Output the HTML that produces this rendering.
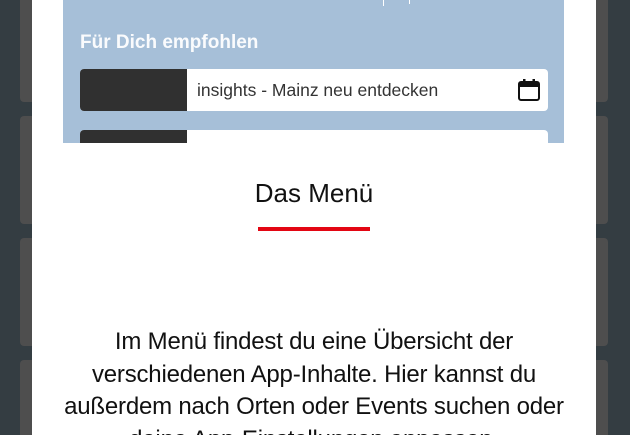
<!DOCTYPE html>
<html style="overflow:hidden;height:435px"><head><meta charset="utf-8"><style>
body{margin:0;width:630px;height:435px;overflow:hidden;background:#343d42;position:relative;font-family:"Liberation Sans",sans-serif}
.c{position:absolute;background:#4e4e4e;border-radius:4px}
.modal{position:absolute;left:32px;top:0;width:564px;height:435px;background:#fff;overflow:hidden}
.blue{position:absolute;left:31px;top:0;width:501px;height:143px;background:#a6bfd8;overflow:hidden}
.row{position:absolute;left:17px;width:468px;height:42px;background:#fff;border-radius:4px;overflow:hidden}
.row .d{position:absolute;left:0;top:0;width:107px;height:100%;background:#303030}
.row span{position:absolute;left:117px;top:11px;font-size:17.5px;color:#333}
h1{position:absolute;left:0;width:564px;top:178px;margin:0;text-align:center;font-weight:normal;font-size:26px;color:#111}
.red{position:absolute;left:226px;top:227px;width:112px;height:4px;background:#e30613}
p{position:absolute;left:-20px;width:604px;top:326px;margin:0;text-align:center;font-size:24px;line-height:32.5px;color:#111;letter-spacing:-0.2px}
</style></head><body>
<div class="c" style="left:20px;top:-5px;width:20px;height:107px"></div>
<div class="c" style="left:20px;top:116px;width:20px;height:108px"></div>
<div class="c" style="left:20px;top:238px;width:20px;height:108px"></div>
<div class="c" style="left:20px;top:360px;width:20px;height:90px"></div>
<div class="c" style="left:588px;top:-5px;width:20px;height:107px"></div>
<div class="c" style="left:588px;top:116px;width:20px;height:108px"></div>
<div class="c" style="left:588px;top:238px;width:20px;height:108px"></div>
<div class="c" style="left:588px;top:360px;width:20px;height:90px"></div>
<div class="modal">
<div class="blue">
<div style="position:absolute;left:320px;top:0;width:1px;height:6px;background:#fff"></div>
<div style="position:absolute;left:346px;top:0;width:1px;height:4px;background:#fff"></div>
<div style="position:absolute;left:17px;top:32px;color:#fff;font-size:19px;font-weight:bold;opacity:.95">Für Dich empfohlen</div>
<div class="row" style="top:69px"><div class="d"></div><span>insights - Mainz neu entdecken</span>
<svg style="position:absolute;left:437px;top:9px" width="24" height="24" viewBox="0 0 24 24"><rect x="2" y="4" width="20" height="18" rx="2" fill="none" stroke="#111" stroke-width="2"/><rect x="2" y="4" width="20" height="5" fill="#111"/><rect x="6" y="1" width="2.5" height="5" fill="#111"/><rect x="15.5" y="1" width="2.5" height="5" fill="#111"/></svg></div>
<div class="row" style="top:130px"><div class="d"></div></div>
</div>
<h1>Das Menü</h1>
<div class="red"></div>
<p>Im Menü findest du eine Übersicht der<br>verschiedenen App-Inhalte. Hier kannst du<br>außerdem nach Orten oder Events suchen oder<br>deine App-Einstellungen anpassen.</p>
</div>
</body></html>
